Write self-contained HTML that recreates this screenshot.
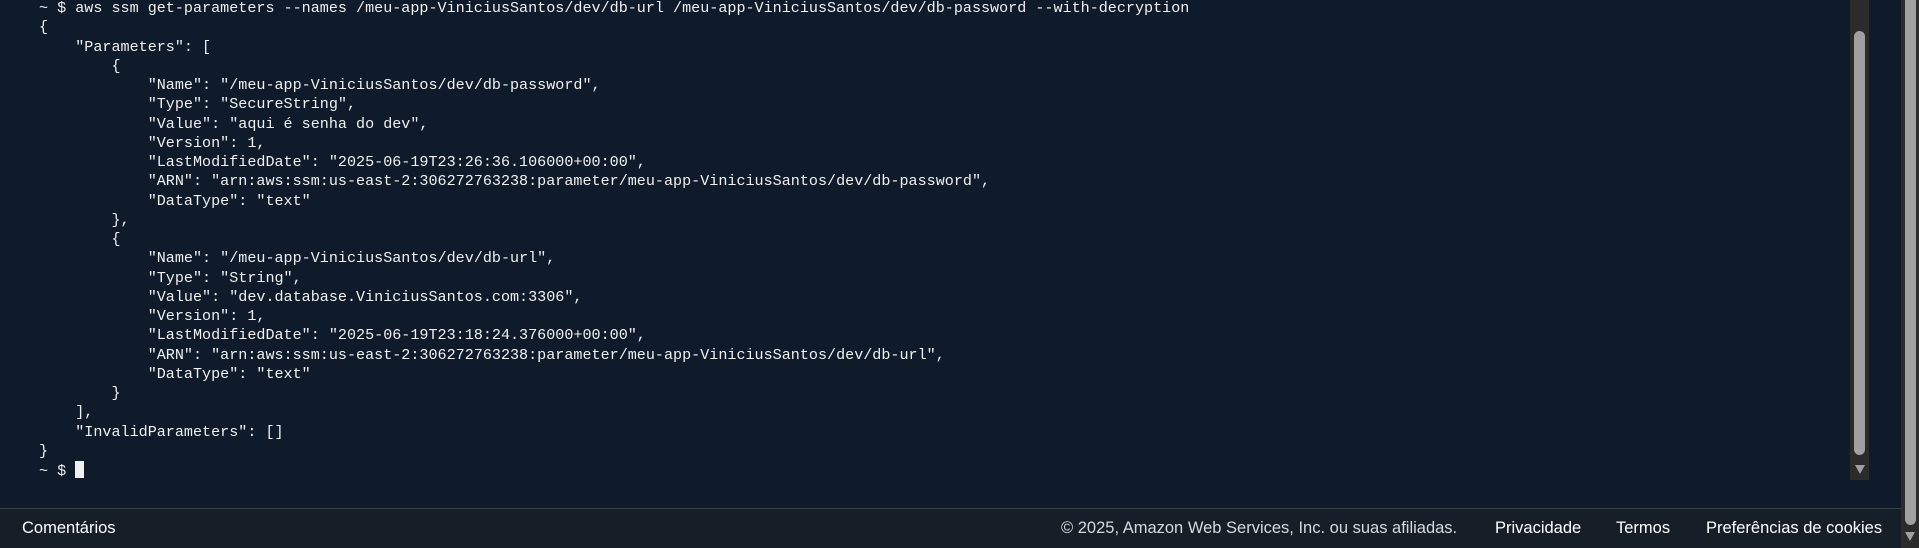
<!DOCTYPE html>
<html><head><meta charset="utf-8"><style>
html,body{margin:0;padding:0;width:1919px;height:548px;overflow:hidden;background:#0f1b2a;}
.term{position:absolute;left:0;top:0;width:1901px;height:508px;background:#0f1b2a;}
pre{position:absolute;left:39px;top:-1px;margin:0;font-family:"Liberation Mono",monospace;font-size:15.1px;line-height:19.25px;color:#f0f0f0;white-space:pre;}
.cur{display:inline-block;width:9px;height:17px;background:#f0f0f0;vertical-align:-3px;}
.track{position:absolute;left:1850px;top:0;width:19px;height:480px;background:#2b2b2b;}
.thumb{position:absolute;left:1854px;top:31px;width:11px;height:424px;background:#a0a0a0;border-radius:6px;}
.arr{position:absolute;width:0;height:0;border-left:5px solid transparent;border-right:5px solid transparent;border-top:9px solid #a0a0a0;}
.footer{position:absolute;left:0;top:508px;width:1901px;height:40px;background:#161e28;border-top:1px solid #3a424c;box-sizing:border-box;font-family:"Liberation Sans",sans-serif;font-size:16.5px;color:#fff;}
.footer span{position:absolute;top:10px;white-space:nowrap;}
.otrack{position:absolute;left:1901px;top:0;width:18px;height:548px;background:#2b2b2b;}
.othumb{position:absolute;left:1905px;top:0;width:11px;height:525px;background:#a0a0a0;border-radius:0 0 6px 6px;}
</style></head><body>
<div class="term">
<pre>~ $ aws ssm get-parameters --names /meu-app-ViniciusSantos/dev/db-url /meu-app-ViniciusSantos/dev/db-password --with-decryption
{
    "Parameters": [
        {
            "Name": "/meu-app-ViniciusSantos/dev/db-password",
            "Type": "SecureString",
            "Value": "aqui é senha do dev",
            "Version": 1,
            "LastModifiedDate": "2025-06-19T23:26:36.106000+00:00",
            "ARN": "arn:aws:ssm:us-east-2:306272763238:parameter/meu-app-ViniciusSantos/dev/db-password",
            "DataType": "text"
        },
        {
            "Name": "/meu-app-ViniciusSantos/dev/db-url",
            "Type": "String",
            "Value": "dev.database.ViniciusSantos.com:3306",
            "Version": 1,
            "LastModifiedDate": "2025-06-19T23:18:24.376000+00:00",
            "ARN": "arn:aws:ssm:us-east-2:306272763238:parameter/meu-app-ViniciusSantos/dev/db-url",
            "DataType": "text"
        }
    ],
    "InvalidParameters": []
}
~ $ <span class="cur"></span></pre>
</div>
<div class="track"></div>
<div class="thumb"></div>
<div class="arr" style="left:1855px;top:465px;"></div>
<div class="footer">
<span style="left:22px;">Comentários</span>
<span style="left:1061px;color:#d5dbdb;">© 2025, Amazon Web Services, Inc. ou suas afiliadas.</span>
<span style="left:1495px;">Privacidade</span>
<span style="left:1616px;">Termos</span>
<span style="left:1706px;">Preferências de cookies</span>
</div>
<div class="otrack"></div>
<div class="othumb"></div>
<div class="arr" style="left:1905px;top:532px;"></div>
</body></html>
